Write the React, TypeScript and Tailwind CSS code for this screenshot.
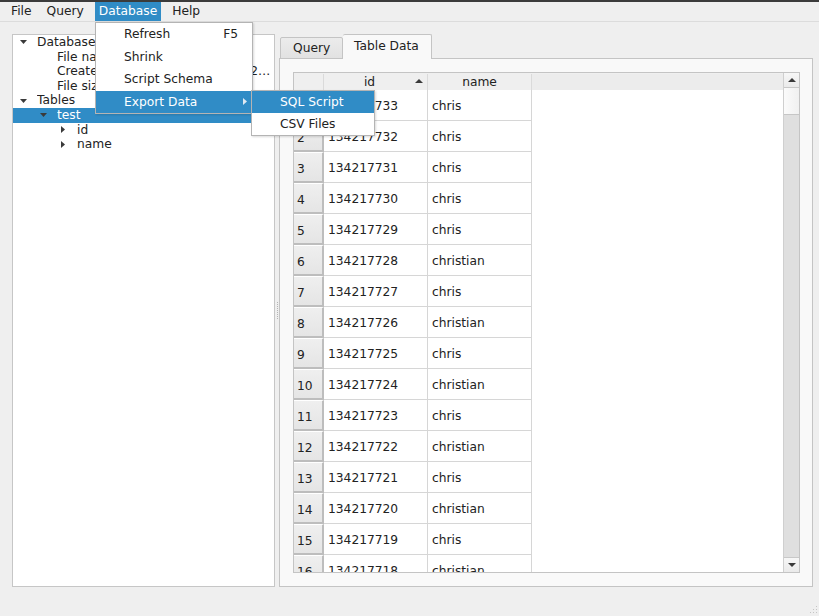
import React from "react";

const rows: [number, string, string][] = [
  [1, "134217733", "chris"],
  [2, "134217732", "chris"],
  [3, "134217731", "chris"],
  [4, "134217730", "chris"],
  [5, "134217729", "chris"],
  [6, "134217728", "christian"],
  [7, "134217727", "chris"],
  [8, "134217726", "christian"],
  [9, "134217725", "chris"],
  [10, "134217724", "christian"],
  [11, "134217723", "chris"],
  [12, "134217722", "christian"],
  [13, "134217721", "chris"],
  [14, "134217720", "christian"],
  [15, "134217719", "chris"],
  [16, "134217718", "christian"],
];

function Down({ color = "#3a3a3a" }: { color?: string }) {
  return (
    <svg width="7" height="4" viewBox="0 0 7 4">
      <path d="M0 0 L7 0 L3.5 4 Z" fill={color} />
    </svg>
  );
}
function Right({ color = "#3a3a3a" }: { color?: string }) {
  return (
    <svg width="4" height="7" viewBox="0 0 4 7">
      <path d="M0 0 L4 3.5 L0 7 Z" fill={color} />
    </svg>
  );
}

type TreeRow = { level: number; arrow?: "down" | "right"; text: string; selected?: boolean };
const tree: TreeRow[] = [
  { level: 0, arrow: "down", text: "Database" },
  { level: 1, text: "File name: test.db" },
  { level: 1, text: "Created: 2/6/2018 8:34:21 PM (2 days ago)" },
  { level: 1, text: "File size: 3 MB" },
  { level: 0, arrow: "down", text: "Tables" },
  { level: 1, arrow: "down", text: "test", selected: true },
  { level: 2, arrow: "right", text: "id" },
  { level: 2, arrow: "right", text: "name" },
];

const levelPad = ["pl-0", "pl-[20px]", "pl-[40px]"];

export default function App() {
  return (
    <div className="w-[819px] h-[616px] bg-[#efefef] relative overflow-hidden flex flex-col font-['DejaVu_Sans',sans-serif] text-[12.25px] text-[#222222]">
      <div className="h-[2px] bg-[#3b3b3b] shrink-0" />
      {/* menu bar */}
      <div className="h-[20px] shrink-0 flex items-stretch pl-[7px] gap-[7px] border-b border-[#dcdcdc]">
        <div className="px-[4px] flex items-center">File</div>
        <div className="px-[4px] flex items-center">Query</div>
        <div className="px-[4px] flex items-center bg-[#308cc6] text-white">Database</div>
        <div className="px-[4px] flex items-center">Help</div>
      </div>

      {/* main */}
      <div className="flex-1 flex pt-[12px] pl-[12px] pr-[6px] pb-[29px] min-h-0">
        {/* tree */}
        <div className="w-[263px] shrink-0 bg-white border border-[#c6c6c6] pt-0 overflow-hidden">
          {tree.map((r, i) => (
            <div
              key={i}
              className={`h-[14.6px] flex items-center ${r.selected ? "bg-[#308cc6] text-white" : ""}`}
            >
              <div className={`flex items-center ${levelPad[r.level]}`}>
                <div className="w-[20px] h-[14px] flex items-center justify-center">
                  {r.arrow === "down" && <Down />}
                  {r.arrow === "right" && <Right />}
                </div>
              </div>
              <div className="ml-[4px] whitespace-nowrap overflow-hidden text-ellipsis min-w-0 pr-[2px]">
                {r.text}
              </div>
            </div>
          ))}
        </div>

        {/* splitter */}
        <div className="w-[4px] shrink-0 flex items-center justify-center">
          <div className="h-[17px] w-0 border-l border-dotted border-[#b4b4b4]" />
        </div>

        {/* tab widget */}
        <div className="flex-1 flex flex-col min-w-0">
          <div className="h-[25px] shrink-0 flex items-end pl-[1px] -mb-[1px] relative z-10">
            <div className="h-[22px] w-[63px] flex items-center pl-[12px] pt-[1px] border border-[#c4c4c4] rounded-t-[2px] bg-gradient-to-b from-[#ececec] to-[#e2e2e2]">
              Query
            </div>
            <div className="h-[25px] w-[89px] flex items-center pl-[11px] border border-[#c4c4c4] border-b-0 border-l-0 rounded-t-[2px] bg-[#f9f9f9] pb-[1px]">
              Table Data
            </div>
          </div>
          <div className="flex-1 border border-[#c4c4c4] bg-[#f9f9f9] pt-[13px] pl-[13px] pr-[12px] pb-[13px] min-h-0 flex">
            {/* table */}
            <div className="flex-1 border border-[#c4c4c4] bg-white flex min-h-0 overflow-hidden">
              <div className="flex-1 flex flex-col overflow-hidden min-w-0">
                <div className="h-[17px] shrink-0 flex bg-[#efefef] pt-[1px]">
                  <div className="w-[30px] shrink-0 border-r border-[#dadada]" />
                  <div className="w-[104px] shrink-0 border-r border-[#dadada] relative flex items-center justify-center">
                    <span className="-ml-[12px]">id</span>
                    <svg className="absolute right-[4px] top-[5px]" width="8" height="4" viewBox="0 0 8 4">
                      <path d="M0 4 L4 0 L8 4 Z" fill="#3a3a3a" />
                    </svg>
                  </div>
                  <div className="w-[104px] shrink-0 border-r border-[#dadada] flex items-center justify-center">
                    name
                  </div>
                  <div className="flex-1 bg-[#ececec]" />
                </div>
                {rows.map(([n, id, name]) => (
                  <div key={n} className="h-[31px] shrink-0 flex">
                    <div className="w-[30px] shrink-0 flex items-center pl-[3px] pt-[4px] bg-gradient-to-b from-[#efefef] to-[#e5e5e5] border-r-2 border-b-2 border-r-[#bdbdbd] border-b-[#bdbdbd] border-t border-t-white">
                      {n}
                    </div>
                    <div className="w-[104px] shrink-0 flex items-center pl-[4px] pt-[2px] border-r border-b border-[#d6d6d6]">
                      {id}
                    </div>
                    <div className="w-[104px] shrink-0 flex items-center pl-[4px] pt-[2px] border-r border-b border-[#d6d6d6]">
                      {name}
                    </div>
                  </div>
                ))}
              </div>
              {/* scrollbar */}
              <div className="w-[16px] shrink-0 flex flex-col bg-[#dfdfdf] border-l border-[#cfcfcf]">
                <div className="h-[15px] shrink-0 flex items-center justify-center bg-gradient-to-b from-[#f7f7f7] to-[#eaeaea] border-b border-[#c8c8c8]">
                  <svg width="8" height="4" viewBox="0 0 8 4">
                    <path d="M0 4 L4 0 L8 4 Z" fill="#3a3a3a" />
                  </svg>
                </div>
                <div className="h-[27px] shrink-0 bg-gradient-to-r from-[#fbfbfb] to-[#f0f0f0] border-b border-[#c6c6c6]" />
                <div className="flex-1" />
                <div className="h-[15px] shrink-0 flex items-center justify-center bg-gradient-to-b from-[#f7f7f7] to-[#eaeaea] border-t border-[#c8c8c8]">
                  <svg width="8" height="4" viewBox="0 0 8 4">
                    <path d="M0 0 L8 0 L4 4 Z" fill="#3a3a3a" />
                  </svg>
                </div>
              </div>
            </div>
          </div>
        </div>
      </div>

      {/* Database menu */}
      <div className="absolute left-[95px] top-[22px] w-[158px] bg-white border border-[#b4b4b4] shadow-[1px_1px_2px_rgba(0,0,0,0.15)] z-20">
        <div className="h-[22.5px] flex items-center pl-[28px] pr-[14px]">
          <span className="flex-1">Refresh</span>
          <span>F5</span>
        </div>
        <div className="h-[22.5px] flex items-center pl-[28px]">Shrink</div>
        <div className="h-[22.5px] flex items-center pl-[28px]">Script Schema</div>
        <div className="h-[22.5px] flex items-center pl-[28px] pr-[5px] bg-[#308cc6] text-white">
          <span className="flex-1">Export Data</span>
          <Right color="#dfe9f2" />
        </div>
      </div>

      {/* Export submenu */}
      <div className="absolute left-[251px] top-[90px] w-[124px] bg-white border border-[#b4b4b4] shadow-[1px_1px_2px_rgba(0,0,0,0.15)] z-30">
        <div className="h-[22px] flex items-center pl-[28px] bg-[#308cc6] text-white">SQL Script</div>
        <div className="h-[22px] flex items-center pl-[28px]">CSV Files</div>
      </div>

      {/* size grip */}
      <svg className="absolute right-[1px] bottom-[2px]" width="8" height="8" viewBox="0 0 8 8">
        <rect x="6" y="0" width="1" height="1" fill="#c4c4c4" />
        <rect x="3" y="3" width="1" height="1" fill="#c4c4c4" />
        <rect x="6" y="3" width="1" height="1" fill="#c4c4c4" />
        <rect x="0" y="6" width="1" height="1" fill="#c4c4c4" />
        <rect x="3" y="6" width="1" height="1" fill="#c4c4c4" />
        <rect x="6" y="6" width="1" height="1" fill="#c4c4c4" />
      </svg>
    </div>
  );
}
